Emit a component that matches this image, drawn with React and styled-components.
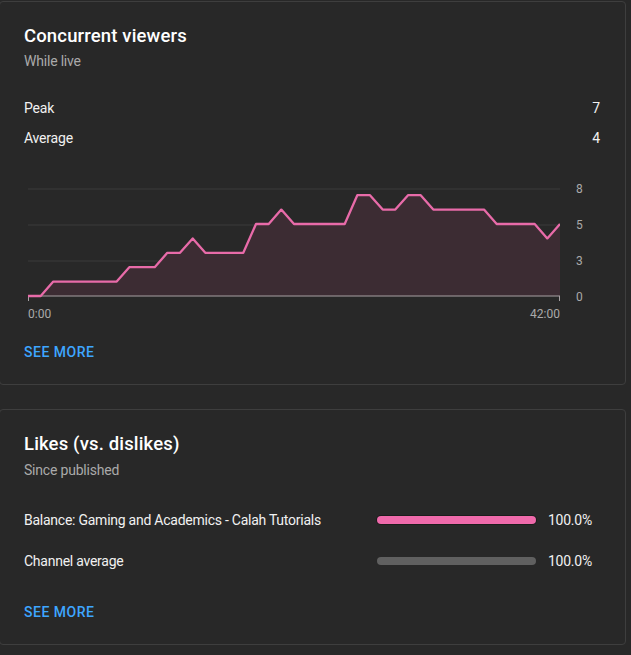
import React from "react";
import styled, { createGlobalStyle } from "styled-components";

const GlobalStyle = createGlobalStyle`
  html, body {
    margin: 0;
    padding: 0;
    background: #282828;
  }
  body {
    font-family: Roboto, "Liberation Sans", sans-serif;
    color: #f1f1f1;
    overflow: hidden;
  }
`;

const Page = styled.div`
  padding-top: 1px;
  width: 631px;
  height: 655px;
  box-sizing: border-box;
`;

const Card = styled.section`
  margin-left: -1px;
  width: 627px;
  box-sizing: border-box;
  border: 1px solid #3e3e3e;
  border-radius: 4px;
  padding: 22px 25px 22px 24px;
  margin-bottom: 24px;
`;

const Title = styled.h2`
  margin: 0;
  font-size: 18.5px;
  letter-spacing: 0.15px;
  line-height: 24px;
  font-weight: 500;
  color: #fff;
`;

const Subtitle = styled.div`
  margin-top: ${(p) => p.$gap || 3}px;
  font-size: 14px;
  letter-spacing: -0.2px;
  line-height: 20px;
  color: #aaaaaa;
`;

const Stats = styled.div`
  margin-top: 27px;
  display: flex;
  flex-direction: column;
  gap: 10px;
`;

const StatRow = styled.div`
  display: flex;
  justify-content: space-between;
  font-size: 14px;
  letter-spacing: -0.2px;
  line-height: 20px;
  color: #f1f1f1;
`;

const ChartWrap = styled.div`
  margin-top: 33px;
  margin-left: 4px;
  display: grid;
  grid-template-columns: 532px 1fr;
  column-gap: 16px;
`;

const YAxis = styled.div`
  display: flex;
  flex-direction: column;
  gap: 20px;
  font-size: 12px;
  line-height: 16px;
  color: #aaaaaa;
`;

const XAxis = styled.div`
  margin-top: 1px;
  display: flex;
  justify-content: space-between;
  font-size: 12px;
  line-height: 16px;
  color: #aaaaaa;
`;

const SeeMore = styled.a`
  display: block;
  margin-top: ${(p) => p.$gap}px;
  font-size: 14px;
  letter-spacing: 0.5px;
  line-height: 20px;
  font-weight: 500;
  color: #3ea6ff;
  text-decoration: none;
  text-transform: uppercase;
  cursor: pointer;
`;

const BarList = styled.div`
  margin-top: 30px;
  display: flex;
  flex-direction: column;
  gap: 21px;
`;

const BarRow = styled.div`
  display: grid;
  grid-template-columns: 1fr 159px 52px;
  column-gap: 12px;
  align-items: center;
  font-size: 14px;
  letter-spacing: -0.25px;
  line-height: 20px;
  color: #f1f1f1;
`;

const Track = styled.div`
  height: 8px;
  border-radius: 4px;
  background: ${(p) => p.$color};
  box-shadow: ${(p) => (p.$outline ? "0 0 0 1px #1c1c1c" : "none")};
`;

const data = [
  0, 0, 1, 1, 1, 1, 1, 1, 2, 2, 2, 3, 3, 4, 3, 3, 3, 3, 5, 5, 6, 5, 5, 5, 5, 5,
  7, 7, 6, 6, 7, 7, 6, 6, 6, 6, 6, 5, 5, 5, 5, 4, 5,
];

const W = 532;
const BASE = 115;
const UNIT = 14.4;

const ViewersChart = () => {
  const step = W / (data.length - 1);
  const pts = data.map((v, i) => [i * step, BASE - v * UNIT]);
  const line = pts.map(([x, y]) => `${x.toFixed(1)},${y.toFixed(1)}`).join(" ");
  const area = `M0,${BASE} L${line.split(" ").join(" L")} L${W},${BASE} Z`;
  return (
    <svg width={W} height={120} viewBox={`0 0 ${W} 120`} style={{ display: "block" }}>
      {[8, 44, 80].map((y) => (
        <line key={y} x1="0" x2={W} y1={y} y2={y} stroke="#3b3b3b" strokeWidth="1" />
      ))}
      <path d={area} fill="#3c2c33" />
      <line x1="0" x2={W} y1={BASE} y2={BASE} stroke="#a7a0a3" strokeWidth="1" />
      <line x1="0.5" x2="0.5" y1={BASE} y2={BASE + 5} stroke="#a7a0a3" strokeWidth="1" />
      <line x1={W - 0.5} x2={W - 0.5} y1={BASE} y2={BASE + 5} stroke="#a7a0a3" strokeWidth="1" />
      <polyline
        points={line}
        fill="none"
        stroke="#e86ba9"
        strokeWidth="2.3"
        strokeLinejoin="round"
      />
    </svg>
  );
};

const App = () => (
  <Page>
    <GlobalStyle />
    <Card>
      <Title>Concurrent viewers</Title>
      <Subtitle>While live</Subtitle>
      <Stats>
        <StatRow>
          <span>Peak</span>
          <span>7</span>
        </StatRow>
        <StatRow>
          <span>Average</span>
          <span>4</span>
        </StatRow>
      </Stats>
      <ChartWrap>
        <ViewersChart />
        <YAxis>
          <span>8</span>
          <span>5</span>
          <span>3</span>
          <span>0</span>
        </YAxis>
        <XAxis>
          <span>0:00</span>
          <span>42:00</span>
        </XAxis>
      </ChartWrap>
      <SeeMore $gap={20}>See more</SeeMore>
    </Card>
    <Card>
      <Title>Likes (vs. dislikes)</Title>
      <Subtitle $gap={4}>Since published</Subtitle>
      <BarList>
        <BarRow>
          <span>Balance: Gaming and Academics - Calah Tutorials</span>
          <Track $color="#ef6aab" $outline />
          <span>100.0%</span>
        </BarRow>
        <BarRow>
          <span>Channel average</span>
          <Track $color="#606060" />
          <span>100.0%</span>
        </BarRow>
      </BarList>
      <SeeMore $gap={31}>See more</SeeMore>
    </Card>
  </Page>
);

export default App;
